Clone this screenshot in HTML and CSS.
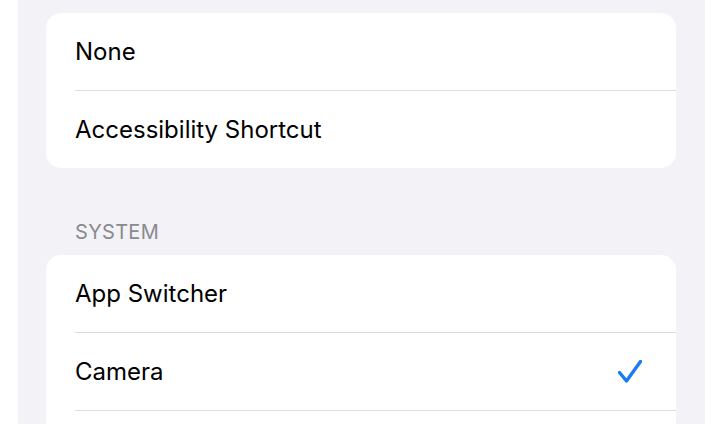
FILE: index.html
```html
<!DOCTYPE html>
<html lang="en">
<head>
    <meta charset="UTF-8">
    <meta name="viewport" content="width=device-width, initial-scale=1.0">
    <title>Double Tap</title>
    <link rel="stylesheet" href="styles.css">
</head>
<body>

<div class="screen">
    <div class="group">
        <div class="row"><div class="row-inner"><span>None</span></div></div>
        <div class="row"><div class="row-inner"><span>Accessibility Shortcut</span></div></div>
    </div>

    <div class="section-header">SYSTEM</div>

    <div class="group continued">
        <div class="row"><div class="row-inner"><span>App Switcher</span></div></div>
        <div class="row selected">
            <div class="row-inner">
                <span>Camera</span>
                <svg class="check" width="24" height="24" viewBox="0 0 24 24">
                    <path d="M1.5 12.5 L8.5 21 L22.5 1.5" fill="none" stroke="#1a7cf2" stroke-width="3.4" stroke-linecap="round" stroke-linejoin="round"/>
                </svg>
            </div>
        </div>
    </div>
</div>

</body>
</html>
```

FILE: styles.css
```css
body {
    margin: 0;
    padding: 0;
    background: #ffffff;
    font-family: 'Inter', 'Liberation Sans', sans-serif;
}

.screen {
    margin-left: 18px;
    width: 687px;
    height: 424px;
    overflow: hidden;
    background: #f2f2f7;
    padding: 13px 29px 0 28px;
    box-sizing: border-box;
}

.group {
    background: #ffffff;
    border-radius: 15px;
    overflow: hidden;
}

.row {
    padding-left: 29px;
}

.row-inner {
    height: 77px;
    display: flex;
    align-items: center;
    justify-content: space-between;
    padding-right: 34px;
    border-bottom: 1px solid #dcdce0;
    font-size: 24px;
    color: #000;
}

.group .row:last-child .row-inner {
    border-bottom: none;
}

/* list keeps going below the fold */
.group.continued {
    padding-bottom: 40px;
}

.group.continued .row:last-child .row-inner {
    border-bottom: 1px solid #dcdce0;
}

.section-header {
    height: 87px;
    padding: 52px 0 0 29px;
    box-sizing: border-box;
    font-size: 20px;
    line-height: 24px;
    color: #8a8a8e;
    letter-spacing: 0.3px;
}

.check {
    display: block;
}
```
